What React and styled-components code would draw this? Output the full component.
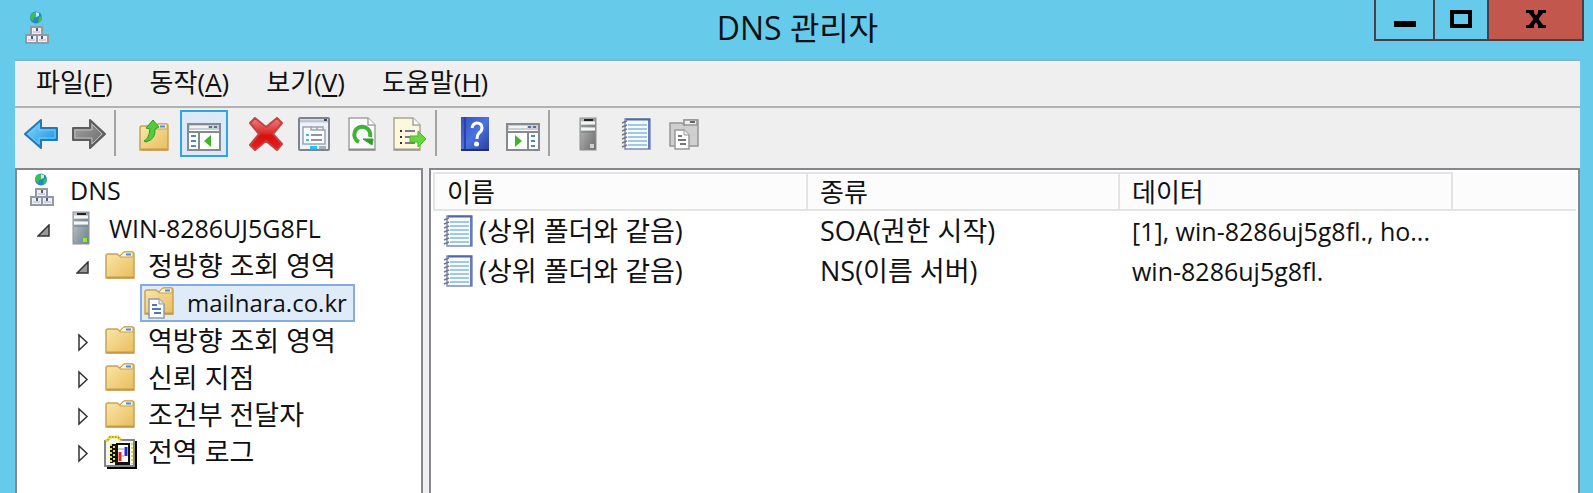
import React, { useState } from "react";
import styled, { createGlobalStyle } from 'styled-components';


const GlobalStyle = createGlobalStyle`
    * { box-sizing: border-box; }

    body {
        margin: 0;
        background-color: #66cbea;
        color: #111;
        font-family: "Open Sans", "Noto Sans CJK KR", sans-serif;
        font-size: 27px;
        line-height: 36px;
    }

    button {
        font: inherit;
        color: inherit;
        padding: 0;
        border: 0;
        background: none;
    }

    svg { display: block; flex: none; }
`

const Window = styled.div`
    min-height: 100vh;
    display: flex;
    flex-direction: column;
    padding: 0 13px 0 15px;
`

const TitleBar = styled.header`
    height: 59px;
    display: grid;
    grid-template-columns: 1fr auto 1fr;
    margin-right: -4px;
`

const AppIcon = styled.div`
    padding: 11px 0 0 10px;
`

const Title = styled.h1`
    margin: 0;
    padding: 6px 4px 0 0;
    font-size: 32px;
    font-weight: 400;
    line-height: 44px;
`

const Caption = styled.div`
    justify-self: end;
    height: 41px;
    display: flex;
    border: 2px solid #4b3f45;
    border-top: 0;
`

const CaptionButton = styled.button`
    width: ${props => props.$width};
    display: flex;
    justify-content: center;
    align-items: center;
    padding-bottom: 2px;
    background-color: ${props => props.$close ? '#c1574d' : 'transparent'};

    & + & { border-left: 2px solid #4b3f45; }
`

const Client = styled.main`
    flex: 1;
    display: flex;
    flex-direction: column;
    background-color: #efefef;
    border-top: 2px solid #88b3c3;
`

const MenuBar = styled.nav`
    height: 47px;
    display: flex;
    align-items: center;
    gap: 37px;
    padding: 0 0 4px 21px;
    font-size: 26px;
    border-bottom: 2px solid #b2b2b2;
`

const MenuButton = styled.button`
    white-space: nowrap;

    span {
        text-decoration: underline;
        text-decoration-thickness: 2px;
        text-underline-offset: 3px;
    }
`

const Toolbar = styled.div`
    height: 60px;
    display: flex;
    align-items: flex-start;
    padding: 2px 0 0 2px;
`

const ToolButton = styled.button`
    width: 48px;
    height: 47px;
    display: flex;
    justify-content: center;
    align-items: center;
    border: 2px solid ${props => props.$active ? '#31a5e0' : 'transparent'};
    background-color: ${props => props.$active ? '#dbe9f9' : 'transparent'};
    margin-right: ${props => props.$active ? '14px' : '0'};
    margin-left: ${props => props.$active ? '2px' : '0'};
`

const Separator = styled.div`
    width: 2px;
    height: 46px;
    margin: 0 14px 0 1px;
    background-color: #a3a3a3;
`

const Panes = styled.div`
    flex: 1;
    display: grid;
    grid-template-columns: 408px minmax(0, 1fr);
    gap: 6px;
`

const Pane = styled.section`
    background-color: #fff;
    border: 2px solid #85878d;
    border-bottom: 0;
`

const Tree = styled.ul`
    margin: 0;
    padding: 1px 0 0;
    list-style: none;
`

const TreeRow = styled.li`
    height: ${props => props.$tall ? '38px' : '37px'};
    display: flex;
    align-items: center;
    padding-left: ${props => props.$indent}px;
    white-space: nowrap;
`

const Twisty = styled.button`
    width: 13px;
    height: 28px;
    padding-top: 4px;
    margin-right: 16px;
    display: flex;
    align-items: center;
    justify-content: center;
`

const Item = styled.span`
    display: flex;
    align-items: center;
    gap: 13px;
    font-size: ${props => props.$latin ? '25px' : '27px'};

    ${props => props.$selected && `
        height: 38px;
        padding: 0 6px 0 2px;
        font-size: 24px;
        border: 2px solid #84acdd;
        background-color: #e0ebfa;
    `}
`

const IconSlot = styled.span`
    width: 30px;
    display: flex;
    justify-content: center;
`

const Records = styled.table`
    width: 100%;
    table-layout: fixed;
    border-collapse: separate;
    border-spacing: 0;
    padding: 2px 2px 0;
`

const Column = styled.col`
    width: ${props => props.$width};
`

const HeadCell = styled.th`
    height: 39px;
    padding: 0 0 0 12px;
    text-align: left;
    font-size: 26px;
    font-weight: 400;
    line-height: 34px;
    background-color: #fcfcfc;
    border: 2px solid #e4e4e4;
    border-left-width: ${props => props.$first ? '2px' : '0'};
    border-right-width: ${props => props.$last ? '0' : '2px'};
    border-top-color: ${props => props.$last ? '#fcfcfc' : '#e4e4e4'};
`

const Cell = styled.td`
    height: 40px;
    padding: 0 0 0 12px;
    font-size: ${props => props.$latin ? '25px' : '27px'};
    line-height: 38px;
    white-space: nowrap;
`

const NameCell = styled.div`
    display: flex;
    align-items: center;
    gap: 6px;
    margin-left: -2px;
`


function DnsIcon() {
    return (
        <svg width="24" height="34" viewBox="0 0 24 34">
            <circle cx="11" cy="6.500" r="6" fill="#2688c4" />
            <path d="M6 3q4-3 7-1l-1 4-3 1-1 3-3-3zM14 6l3-1-1 5-3 2z" fill="#3fc04d" />
            <path d="M11 1l3 1v3l-3 1z" fill="#b9ecf8" />
            <g fill="#eef0f8" stroke="#9497a4" strokeWidth="2">
                <path d="M6 16h11v8H6zM1 24h11v8H1zM12 24h11v8H12z" />
            </g>
            <path d="M12 17v3M7 25v3M17 25v3" stroke="#555b72" strokeWidth="2" />
            <path d="M8 21h7M3 29h7M14 29h7" stroke="#cdd0df" strokeWidth="2" />
        </svg>
    )
}

function ServerIcon({ gray }) {
    return (
        <svg width="18" height="34" viewBox="0 0 18 34">
            <defs>
                <linearGradient id={gray ? 'srvGray' : 'srv'} x1="0" y1="0" x2="1" y2="1">
                    <stop offset="0" stopColor={gray ? '#c4c4c4' : '#c3ced3'} />
                    <stop offset="1" stopColor={gray ? '#696969' : '#6e7d86'} />
                </linearGradient>
            </defs>
            <rect x="1" y="1" width="16" height="32" fill={`url(#${gray ? 'srvGray' : 'srv'})`} stroke="#8b9094" />
            <path d="M2 6h14M2 12h14" stroke="#f5f7f7" strokeWidth="3" />
            <path d="M5 3h9" stroke="#222" strokeWidth="2" />
            <path d="M2 9h14M2 15h14" stroke="#707a80" strokeWidth="1" />
            <rect x="11" y="27" width="4" height="4" fill={gray ? '#d0d0d0' : '#8ef029'} />
        </svg>
    )
}

function FolderShape() {
    return (
        <g>
            <defs>
                <linearGradient id="folder" x1="0" y1="0" x2="1" y2="1">
                    <stop offset="0" stopColor="#fbe7ab" />
                    <stop offset="1" stopColor="#e8bd5c" />
                </linearGradient>
            </defs>
            <path d="M1 5q0-2 2-2h9l3 2 3-3q1-1 2-1h7q2 0 2 2v24H1z" fill="url(#folder)" stroke="#c9a254" strokeWidth="1.500" />
            <path d="M15 5l3-3q1-1 2-1h8v4q0 1-2 1H15z" fill="#fdf3cf" stroke="#c9a254" />
            <path d="M21 3.500h5" stroke="#3f8fe6" strokeWidth="2" />
            <path d="M2 26.500h27" stroke="#c49a49" strokeWidth="2" />
        </g>
    )
}

function FolderIcon() {
    return (
        <svg width="30" height="29" viewBox="0 0 30 29">
            <FolderShape />
        </svg>
    )
}

function ZoneIcon() {
    return (
        <svg width="30" height="32" viewBox="0 0 30 32">
            <FolderShape />
            <path d="M5 12h10l5 5v14H5z" fill="#fff" stroke="#8d99ab" strokeWidth="1.500" />
            <path d="M15 12v5h5" fill="#e4e9f0" stroke="#8d99ab" />
            <path d="M8 18h5M8 22h9M10 26h7" stroke="#4b79b8" strokeWidth="2" />
        </svg>
    )
}

function LogIcon() {
    return (
        <svg width="34" height="34" viewBox="0 0 34 34">
            <path d="M4 31V34H34V6H30V31z" fill="#000" />
            <path d="M2 6l3-1 2-3h8l3 3h13v26H2z" fill="#f6f6f0" stroke="#858585" strokeWidth="2" />
            <path d="M3 6l4-4h8l3 4" fill="none" stroke="#e8e31c" strokeWidth="3" strokeDasharray="2 1" />
            <rect x="7" y="9" width="6" height="19" fill="#111" />
            <path d="M8 9v19M11 11v17" stroke="#e8e31c" strokeWidth="2" strokeDasharray="2 2" />
            <path d="M14 9h12v19H14z" fill="#fff" stroke="#111" strokeWidth="2" />
            <path d="M12 28.500h15" stroke="#111" strokeWidth="3" />
            <path d="M29 8v21" stroke="#e8e31c" strokeWidth="2" strokeDasharray="2 2" />
            <path d="M17 17v9" stroke="#e52222" strokeWidth="3" />
            <path d="M23 12v9" stroke="#2229d0" strokeWidth="3" />
            <path d="M15 14h6M18 21h3" stroke="#999" strokeWidth="1" />
        </svg>
    )
}

function NotebookIcon() {
    return (
        <svg width="30" height="32" viewBox="0 0 30 32">
            <path d="M4 1h25v30H4z" fill="#f6fbfe" stroke="#7c8fb9" strokeWidth="1.500" />
            <path d="M28 1v30" stroke="#6a78bd" strokeWidth="2" />
            <path d="M5 1.500h24" stroke="#5168a4" strokeWidth="2" />
            <path d="M7 7h19M7 11h19M7 15h19M7 19h19M7 23h19M7 27h19" stroke="#85b9da" strokeWidth="1.500" />
            <path d="M1 5l5-2M1 9l5-2M1 13l5-2M1 17l5-2M1 21l5-2M1 25l5-2M1 29l5-2" stroke="#74787e" strokeWidth="1.500" />
        </svg>
    )
}

function ArrowIcon({ forward }) {
    const id = forward ? 'fwd' : 'back'
    return (
        <svg width="34" height="32" viewBox="0 0 34 32">
            <defs>
                <linearGradient id={id} x1="0" y1="0" x2="1" y2="1">
                    <stop offset="0" stopColor={forward ? '#a5a5a5' : '#8cdcff'} />
                    <stop offset="1" stopColor={forward ? '#686868' : '#108bdc'} />
                </linearGradient>
            </defs>
            <path
                d={forward ? 'M1 10h17V2l15 14-15 14v-8H1z' : 'M33 10H17V2L1 16l16 14v-8h16z'}
                fill={`url(#${id})`}
                stroke={forward ? '#5d5d5d' : '#2877b5'}
                strokeWidth="2"
                strokeLinejoin="round"
            />
            <path
                d={forward ? 'M3 12h17V6l10 10-10 10v-6H3z' : 'M31 12H15V6L4 16l11 10v-6h16z'}
                fill="none"
                stroke={forward ? '#bcbcbc' : '#73cbfa'}
            />
        </svg>
    )
}

function UpIcon() {
    return (
        <svg width="30" height="34" viewBox="0 0 30 34">
            <g transform="translate(0 6)"><FolderShape /></g>
            <path d="M5 24q5-2 6-12l-4-1 7-8 6 7-4 2q1 10-9 13z" fill="#54cc39" stroke="#2c9a25" strokeLinejoin="round" />
        </svg>
    )
}

function PanelIcon({ action }) {
    return (
        <svg width="34" height="34" viewBox="0 -6 34 34">
            <rect x="1" y="1" width="32" height="26" fill="#fff" stroke="#858990" strokeWidth="2" />
            <rect x="2" y="2" width="30" height="5" fill="#c9cdd5" />
            <path d="M3 4h18" stroke="#f2f3f5" strokeWidth="2" />
            <path d="M22 4h3M27 4h3" stroke="#5c7096" strokeWidth="2" />
            <path d="M1 9h32" stroke="#858990" strokeWidth="2" />
            {action ? (
                <g>
                    <path d="M22 10v16" stroke="#858990" strokeWidth="2" />
                    <path d="M25 13h4M25 18h4M25 23h4" stroke="#4e86c9" strokeWidth="2" />
                    <path d="M9 12l7 6-7 6z" fill="#3eb527" />
                </g>
            ) : (
                <g>
                    <path d="M12 10v16" stroke="#858990" strokeWidth="2" />
                    <path d="M4 13h5M4 18h5M4 23h5" stroke="#4e86c9" strokeWidth="2" />
                    <path d="M24 12l-7 6 7 6z" fill="#3eb527" />
                </g>
            )}
        </svg>
    )
}

function DeleteIcon() {
    return (
        <svg width="34" height="34" viewBox="0 0 34 34">
            <defs>
                <linearGradient id="del" x1="0" y1="0" x2="0" y2="1">
                    <stop offset="0" stopColor="#ee8080" />
                    <stop offset=".45" stopColor="#de3030" />
                    <stop offset=".55" stopColor="#d80f0f" />
                    <stop offset="1" stopColor="#ea2020" />
                </linearGradient>
            </defs>
            <path d="M1 6l5-5 11 9L28 1l5 5-9 11 9 10-5 6-11-9L6 33l-5-5 9-11z" fill="url(#del)" stroke="#bf4444" strokeWidth="2" strokeLinejoin="round" />
        </svg>
    )
}

function PropertiesIcon() {
    return (
        <svg width="32" height="34" viewBox="0 0 32 34">
            <rect x="1" y="1" width="30" height="32" rx="1" fill="#eff2f6" stroke="#7d848e" strokeWidth="2" />
            <path d="M2 4h28" stroke="#c0c7d0" strokeWidth="3" />
            <path d="M26 3h3" stroke="#3d4a66" strokeWidth="2" />
            <path d="M5 10h8v3h14v14H5z" fill="#fff" stroke="#9ba3b4" strokeWidth="1.500" />
            <path d="M13 10h6v3M19 10h6v3" fill="none" stroke="#9ba3b4" strokeWidth="1.500" />
            <path d="M8 18h3M8 23h3" stroke="#35c2ee" strokeWidth="2" />
            <path d="M13 18h11M13 23h11" stroke="#8f96a2" strokeWidth="2" />
            <path d="M12 30.500h7" stroke="#20c5f4" strokeWidth="3" />
            <path d="M21 30.500h7" stroke="#a9b0b8" strokeWidth="3" />
        </svg>
    )
}

function RefreshIcon() {
    return (
        <svg width="28" height="34" viewBox="0 0 28 34">
            <path d="M1 1h19l7 7v25H1z" fill="#fbfbfb" stroke="#a3a3a3" strokeWidth="1.500" />
            <path d="M20 1v7h7" fill="#fff" stroke="#a3a3a3" strokeWidth="1.500" />
            <path d="M1 32.500h26" stroke="#8b8b8b" strokeWidth="2" />
            <path d="M11 25A8 8 0 1 1 22 20" fill="none" stroke="#3eb336" strokeWidth="4" />
            <path d="M15 22h10l-1 6z" fill="#2f9f2c" stroke="#2f9f2c" />
        </svg>
    )
}

function ExportIcon() {
    return (
        <svg width="34" height="34" viewBox="0 0 34 34">
            <path d="M1 1h19l7 7v25H1z" fill="#fdf8dc" stroke="#aaa593" strokeWidth="1.500" />
            <path d="M20 1v7h7" fill="#fff" stroke="#a3a3a3" strokeWidth="1.500" />
            <path d="M1 32.500h26" stroke="#9a9a92" strokeWidth="2" />
            <path d="M7 14h2M7 20h2M7 26h2" stroke="#333" strokeWidth="2" />
            <path d="M12 14h10M12 20h6M12 26h10" stroke="#80769c" strokeWidth="2" />
            <path d="M17 19h8v-5l8 8-8 8v-5h-8z" fill="#66d83e" stroke="#48b52c" strokeLinejoin="round" />
        </svg>
    )
}

function HelpIcon() {
    return (
        <svg width="28" height="34" viewBox="0 0 28 34">
            <defs>
                <linearGradient id="help" x1="0" y1="0" x2="1" y2="1">
                    <stop offset="0" stopColor="#3450bd" />
                    <stop offset=".5" stopColor="#4a72e2" />
                    <stop offset="1" stopColor="#263f9c" />
                </linearGradient>
            </defs>
            <rect width="28" height="34" fill="url(#help)" />
            <path d="M4 0v34" stroke="#2c43a4" strokeWidth="2" />
            <path d="M0 33h28" stroke="#243263" strokeWidth="2" />
            <path d="M11 11q1-5 5-5 5 0 5 5 0 3-3 5-2 2-2 6" fill="none" stroke="#fff" strokeWidth="3" />
            <circle cx="15.500" cy="27" r="2.500" fill="#fff" />
        </svg>
    )
}

function NewZoneIcon() {
    return (
        <svg width="30" height="32" viewBox="0 0 30 32">
            <path d="M1 5h12l2 2V2h14v26H1z" fill="#cfcfcf" stroke="#969696" strokeWidth="1.500" />
            <path d="M15 2h13v5H15z" fill="#ededed" stroke="#969696" strokeWidth="1.500" />
            <path d="M21 4h5" stroke="#666" strokeWidth="2" />
            <path d="M6 12h9l5 5v14H6z" fill="#fff" stroke="#999" strokeWidth="1.500" />
            <path d="M15 12v5h5" fill="#eee" stroke="#999" />
            <path d="M9 18h4M9 22h8M11 26h6" stroke="#777" strokeWidth="2" />
        </svg>
    )
}

function TwistyIcon({ open }) {
    return open ? (
        <svg width="13" height="13" viewBox="0 0 13 13">
            <path d="M12 1v11H1z" fill="#999" stroke="#333" strokeWidth="1.500" />
        </svg>
    ) : (
        <svg width="12" height="19" viewBox="0 0 12 19">
            <path d="M2 2v15l8-7.500z" fill="#fff" stroke="#333" strokeWidth="1.500" />
        </svg>
    )
}


const menus = [
    { label: '파일', hotkey: 'F' },
    { label: '동작', hotkey: 'A' },
    { label: '보기', hotkey: 'V' },
    { label: '도움말', hotkey: 'H' },
]

const nodes = [
    { name: 'DNS', icon: <DnsIcon />, indent: 10, latin: true, tall: true },
    { name: 'WIN-8286UJ5G8FL', icon: <ServerIcon />, indent: 20, twisty: true, open: true, latin: true, tall: true },
    { name: '정방향 조회 영역', icon: <FolderIcon />, indent: 59, twisty: true, open: true },
    { name: 'mailnara.co.kr', icon: <ZoneIcon />, indent: 123, latin: true, tall: true },
    { name: '역방향 조회 영역', icon: <FolderIcon />, indent: 59, twisty: true },
    { name: '신뢰 지점', icon: <FolderIcon />, indent: 59, twisty: true },
    { name: '조건부 전달자', icon: <FolderIcon />, indent: 59, twisty: true },
    { name: '전역 로그', icon: <LogIcon />, indent: 59, twisty: true },
]

const records = [
    { name: '(상위 폴더와 같음)', type: 'SOA(권한 시작)', data: '[1], win-8286uj5g8fl., ho...' },
    { name: '(상위 폴더와 같음)', type: 'NS(이름 서버)', data: 'win-8286uj5g8fl.' },
]

function App() {
    const [showTree, setShowTree] = useState(true);

    return (
        <Window>
            <GlobalStyle />
            <TitleBar>
                <AppIcon><DnsIcon /></AppIcon>
                <Title>DNS 관리자</Title>
                <Caption>
                    <CaptionButton $width="57px" aria-label="최소화">
                        <svg width="22" height="18" viewBox="0 0 22 18"><path d="M0 14h22" stroke="#000" strokeWidth="6" /></svg>
                    </CaptionButton>
                    <CaptionButton $width="54px" aria-label="최대화">
                        <svg width="22" height="18" viewBox="0 0 22 18"><path d="M2 2h18v14H2z" fill="none" stroke="#000" strokeWidth="4" /></svg>
                    </CaptionButton>
                    <CaptionButton $width="95px" $close aria-label="닫기">
                        <svg width="20" height="18" viewBox="0 0 20 18">
                            <path d="M4 1l12 16M16 1L4 17" stroke="#000" strokeWidth="4" />
                            <path d="M0 1.500h8M12 1.500h8M0 16.500h8M12 16.500h8" stroke="#000" strokeWidth="3" />
                        </svg>
                    </CaptionButton>
                </Caption>
            </TitleBar>

            <Client>
                <MenuBar>
                    {menus.map(menu => (
                        <MenuButton key={menu.hotkey}>{menu.label}(<span>{menu.hotkey}</span>)</MenuButton>
                    ))}
                </MenuBar>

                <Toolbar>
                    <ToolButton aria-label="뒤로"><ArrowIcon /></ToolButton>
                    <ToolButton aria-label="앞으로"><ArrowIcon forward /></ToolButton>
                    <Separator />
                    <ToolButton aria-label="위로"><UpIcon /></ToolButton>
                    <ToolButton $active aria-label="콘솔 트리" aria-pressed={showTree} onClick={() => setShowTree(!showTree)}><PanelIcon /></ToolButton>
                    <ToolButton aria-label="삭제"><DeleteIcon /></ToolButton>
                    <ToolButton aria-label="속성"><PropertiesIcon /></ToolButton>
                    <ToolButton aria-label="새로 고침"><RefreshIcon /></ToolButton>
                    <ToolButton aria-label="목록 내보내기"><ExportIcon /></ToolButton>
                    <Separator />
                    <ToolButton aria-label="도움말"><HelpIcon /></ToolButton>
                    <ToolButton aria-label="작업 창"><PanelIcon action /></ToolButton>
                    <Separator />
                    <ToolButton aria-label="새 서버"><ServerIcon gray /></ToolButton>
                    <ToolButton aria-label="새 레코드"><NotebookIcon /></ToolButton>
                    <ToolButton aria-label="새 영역"><NewZoneIcon /></ToolButton>
                </Toolbar>

                <Panes>
                    <Pane>
                        {showTree && (
                            <Tree>
                                {nodes.map(node => (
                                    <TreeRow key={node.name} $indent={node.indent} $tall={node.tall}>
                                        {node.twisty && (
                                            <Twisty aria-label={node.name} aria-expanded={!!node.open}>
                                                <TwistyIcon open={node.open} />
                                            </Twisty>
                                        )}
                                        <Item $latin={node.latin} $selected={node.name === 'mailnara.co.kr'}>
                                            <IconSlot>{node.icon}</IconSlot>
                                            {node.name}
                                        </Item>
                                    </TreeRow>
                                ))}
                            </Tree>
                        )}
                    </Pane>

                    <Pane>
                        <Records>
                            <colgroup>
                                <Column $width="375px" />
                                <Column $width="312px" />
                                <Column $width="333px" />
                                <Column />
                            </colgroup>
                            <thead>
                                <tr>
                                    <HeadCell $first>이름</HeadCell>
                                    <HeadCell>종류</HeadCell>
                                    <HeadCell>데이터</HeadCell>
                                    <HeadCell $last />
                                </tr>
                            </thead>
                            <tbody>
                                {records.map(record => (
                                    <tr key={record.type}>
                                        <Cell><NameCell><NotebookIcon />{record.name}</NameCell></Cell>
                                        <Cell>{record.type}</Cell>
                                        <Cell $latin>{record.data}</Cell>
                                        <Cell />
                                    </tr>
                                ))}
                            </tbody>
                        </Records>
                    </Pane>
                </Panes>
            </Client>
        </Window>
    )

}

export default App;
